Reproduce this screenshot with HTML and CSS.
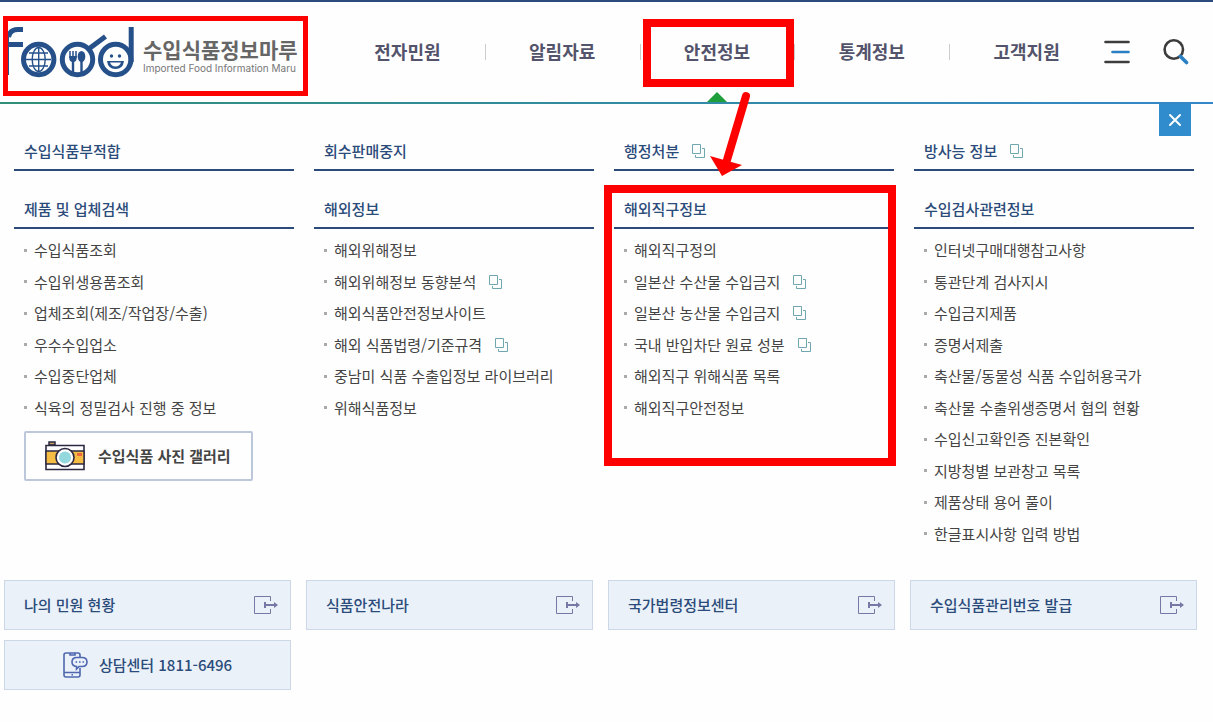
FILE: index.html
```html
<!DOCTYPE html>
<html lang="ko">
<head>
  <meta charset="UTF-8">
  <meta name="viewport" content="width=device-width, initial-scale=1.0">
  <title>수입식품정보마루</title>
  <link rel="stylesheet" href="styles.css">
</head>
<body>
  <!-- 공통 아이콘 -->
  <svg class="defs" width="0" height="0" aria-hidden="true">
    <symbol id="ico-blank" viewBox="0 0 13 14">
      <path d="M.5.5h8v9h-8zM10 4.500h2.500v9h-9v-2.500" fill="none" stroke="#6fa6af"/>
    </symbol>
    <symbol id="ico-exit" viewBox="0 0 24 18">
      <path d="M16.500 5V.5H.5v17h16V13" fill="none" stroke="#7878a6"/>
      <path d="M10 6h2v2h8V6l4 3-4 3v-2h-8v2h-2z" fill="#7878a6"/>
    </symbol>
  </svg>

  <header class="header">
    <a class="logo" href="#">
      <svg class="logo-mark" width="126" height="52" viewBox="8 26 126 52" aria-hidden="true">
        <g fill="none" stroke="#25508a">
          <path d="M23 29.500h-5q-8 0-9.500 7.500M8 44.500h15" stroke-width="5"/>
          <path d="M8.500 34v41" stroke-width="1"/>
          <circle cx="38.700" cy="59.500" r="15.200" stroke-width="5"/>
          <path d="M38.700 47v25M26 59.500h25M29 53h19M29 66h19" stroke-width="1.400"/>
          <ellipse cx="38.700" cy="59.500" rx="6.500" ry="12" stroke-width="1.400"/>
          <circle cx="77.500" cy="59.500" r="15.200" stroke-width="5"/>
          <path d="M90 48l15.500-11.500" stroke-width="5"/>
          <circle cx="115.700" cy="59.500" r="15.200" stroke-width="5"/>
          <path d="M131.200 27v35" stroke-width="5"/>
          <path d="M73 60v12M81.500 60v12" stroke-width="2.400"/>
          <path d="M70 51v7M73 51v7M76 51v7" stroke-width="1.500"/>
        </g>
        <g fill="#25508a">
          <path d="M69.300 56h7.400v2q0 4-3.700 4t-3.700-4z"/>
          <ellipse cx="81.500" cy="56.500" rx="3.800" ry="5.500"/>
          <circle cx="111.500" cy="56" r="1.700"/>
          <circle cx="119.500" cy="56" r="1.700"/>
          <path d="M107 61h17q-1 8-8.500 8T107 61zm3 1.500q1.500 4 5.500 4t5.500-4z" fill-rule="evenodd"/>
        </g>
      </svg>
      <span class="logo-text">
        <strong>수입식품정보마루</strong>
        <small>Imported Food Information Maru</small>
      </span>
    </a>

    <nav class="gnb">
      <a href="#">전자민원</a>
      <a href="#">알림자료</a>
      <a class="on" href="#">안전정보</a>
      <a href="#">통계정보</a>
      <a href="#">고객지원</a>
    </nav>

    <div class="tools">
      <button type="button" aria-label="전체메뉴">
        <svg width="26" height="26" viewBox="0 0 26 26" fill="none" stroke-width="2.600" stroke-linecap="round">
          <path d="M1.500 3h23M1.500 23h23" stroke="#3c3c3c"/>
          <path d="M8.500 13h16" stroke="#2a80c4"/>
        </svg>
      </button>
      <button type="button" aria-label="검색">
        <svg width="26" height="26" viewBox="0 0 26 26" fill="none">
          <circle cx="10.800" cy="10.500" r="9.200" stroke="#3c3c3c" stroke-width="2.600"/>
          <path d="M17.500 17.500l6 6" stroke="#2a80c4" stroke-width="3.600" stroke-linecap="round"/>
        </svg>
      </button>
    </div>
  </header>

  <main class="panel">
    <button class="close" type="button" aria-label="닫기">
      <svg width="14" height="14" viewBox="0 0 14 14"><path d="M2 2l10 10M12 2L2 12" stroke="#fff" stroke-width="2" stroke-linecap="round"/></svg>
    </button>

    <div class="columns">
      <section>
        <h2><a href="#">수입식품부적합</a></h2>
      </section>
      <section>
        <h2><a href="#">회수판매중지</a></h2>
      </section>
      <section>
        <h2><a href="#">행정처분<svg class="blank"><use href="#ico-blank"/></svg></a></h2>
      </section>
      <section>
        <h2><a href="#">방사능 정보<svg class="blank"><use href="#ico-blank"/></svg></a></h2>
      </section>

      <section>
        <h2><a href="#">제품 및 업체검색</a></h2>
        <ul>
          <li><a href="#">수입식품조회</a></li>
          <li><a href="#">수입위생용품조회</a></li>
          <li><a href="#">업체조회(제조/작업장/수출)</a></li>
          <li><a href="#">우수수입업소</a></li>
          <li><a href="#">수입중단업체</a></li>
          <li><a href="#">식육의 정밀검사 진행 중 정보</a></li>
        </ul>
        <a class="gallery" href="#">
          <svg width="40" height="30" viewBox="0 0 40 30" aria-hidden="true">
            <path d="M4 1h6v3H4z" fill="#c9a060" stroke="#2b2842" stroke-width="1.500"/>
            <path d="M1 4.500h38v24H1z" fill="#fff" stroke="#2b2842" stroke-width="1.600"/>
            <path d="M1 10h38v13H1z" fill="#f6bd45" stroke="#2b2842" stroke-width="1.400"/>
            <path d="M32 12h5v3h-5z" fill="#ee6a3c"/>
            <circle cx="20" cy="16.500" r="9" fill="#fff" stroke="#2b2842" stroke-width="1.600"/>
            <circle cx="20" cy="16.500" r="6" fill="#93d8dc"/>
          </svg>
          수입식품 사진 갤러리
        </a>
      </section>
      <section>
        <h2><a href="#">해외정보</a></h2>
        <ul>
          <li><a href="#">해외위해정보</a></li>
          <li><a href="#">해외위해정보 동향분석<svg class="blank"><use href="#ico-blank"/></svg></a></li>
          <li><a href="#">해외식품안전정보사이트</a></li>
          <li><a href="#">해외 식품법령/기준규격<svg class="blank"><use href="#ico-blank"/></svg></a></li>
          <li><a href="#">중남미 식품 수출입정보 라이브러리</a></li>
          <li><a href="#">위해식품정보</a></li>
        </ul>
      </section>
      <section class="marked">
        <svg class="arrow" width="42" height="90" viewBox="0 0 42 90" aria-hidden="true">
          <path d="M37 8L18 72" stroke="#f00" stroke-width="8" stroke-linecap="round"/>
          <path d="M1 68l32 9-20 11z" fill="#f00"/>
        </svg>
        <h2><a href="#">해외직구정보</a></h2>
        <ul>
          <li><a href="#">해외직구정의</a></li>
          <li><a href="#">일본산 수산물 수입금지<svg class="blank"><use href="#ico-blank"/></svg></a></li>
          <li><a href="#">일본산 농산물 수입금지<svg class="blank"><use href="#ico-blank"/></svg></a></li>
          <li><a href="#">국내 반입차단 원료 성분<svg class="blank"><use href="#ico-blank"/></svg></a></li>
          <li><a href="#">해외직구 위해식품 목록</a></li>
          <li><a href="#">해외직구안전정보</a></li>
        </ul>
      </section>
      <section>
        <h2><a href="#">수입검사관련정보</a></h2>
        <ul>
          <li><a href="#">인터넷구매대행참고사항</a></li>
          <li><a href="#">통관단계 검사지시</a></li>
          <li><a href="#">수입금지제품</a></li>
          <li><a href="#">증명서제출</a></li>
          <li><a href="#">축산물/동물성 식품 수입허용국가</a></li>
          <li><a href="#">축산물 수출위생증명서 협의 현황</a></li>
          <li><a href="#">수입신고확인증 진본확인</a></li>
          <li><a href="#">지방청별 보관창고 목록</a></li>
          <li><a href="#">제품상태 용어 풀이</a></li>
          <li><a href="#">한글표시사항 입력 방법</a></li>
        </ul>
      </section>
    </div>

    <div class="quick">
      <a href="#">나의 민원 현황<svg class="exit"><use href="#ico-exit"/></svg></a>
      <a href="#">식품안전나라<svg class="exit"><use href="#ico-exit"/></svg></a>
      <a href="#">국가법령정보센터<svg class="exit"><use href="#ico-exit"/></svg></a>
      <a href="#">수입식품관리번호 발급<svg class="exit"><use href="#ico-exit"/></svg></a>
      <a class="call" href="tel:1811-6496">
        <svg width="25" height="26" viewBox="0 0 25 26" fill="none" stroke="#4f67b0" stroke-width="1.600" aria-hidden="true">
          <path d="M17 6V3q0-2-2-2H3Q1 1 1 3v20q0 2 2 2h12q2 0 2-2v-7M1 20.500h16M7 1v2h5V1"/>
          <path d="M13 5.500h6q5 0 5 4.500t-5 4.500h-3l-2.500 2.500v-2.500Q9 14 9 10t4-4.500z" fill="#eaf1f9"/>
          <path d="M12.500 10h1.600M16 10h1.600M19.500 10h1.600M8.500 22.800h1.500"/>
        </svg>
        상담센터 1811-6496
      </a>
    </div>
  </main>
</body>
</html>
```
FILE: styles.css
```css
*,
*::before,
*::after {
  box-sizing: border-box;
}

body {
  margin: 0;
  font-family: "Noto Sans CJK KR", sans-serif;
  font-size: 15px;
  color: #444;
  background-color: #fefefe;
  border-top: 2px solid #2b4b7e;
}

a {
  color: inherit;
  text-decoration: none;
}

button {
  display: flex;
  align-items: center;
  justify-content: center;
  padding: 0;
  border: none;
  background: none;
  cursor: pointer;
}

.defs {
  position: absolute;
}

/* header */
.header {
  display: flex;
  align-items: center;
  height: 102px;
  border-bottom: 2px solid;
  border-image: linear-gradient(to right, #2f8f78, #3487c8) 1;
}

.logo {
  position: relative;
  display: flex;
  align-items: center;
  gap: 9px;
  width: 330px;
  height: 100px;
  padding-left: 8px;
}

.logo-text {
  display: flex;
  flex-direction: column;
  padding-top: 6px;
}

.logo-text strong {
  font-size: 21px;
  line-height: 26px;
  color: #666;
}

.logo-text small {
  font-family: Inter, sans-serif;
  font-size: 10px;
  line-height: 12px;
  color: #777;
}

/* red marks */
.logo::after,
.gnb .on::after,
.marked::after {
  content: "";
  position: absolute;
  border: 8px solid #f00;
  pointer-events: none;
}

.logo::after {
  top: 14px;
  left: 3px;
  width: 305px;
  height: 80px;
  border-width: 5px;
}

.gnb .on::after {
  top: 17px;
  left: 3px;
  right: 0;
  height: 68px;
}

.marked::after {
  top: -12px;
  left: -10px;
  right: -2px;
  height: 281px;
}

.arrow {
  position: absolute;
  top: -109px;
  left: 95px;
}

.gnb {
  flex: 1;
  display: flex;
}

.gnb a {
  position: relative;
  flex: 1;
  height: 100px;
  line-height: 99px;
  text-align: center;
  font-size: 18px;
  font-weight: 700;
  color: #53536b;
}

.gnb a + a {
  background: linear-gradient(#ccc, #ccc) left center / 1px 16px no-repeat;
}

.gnb .on::before {
  content: "";
  position: absolute;
  bottom: 0;
  left: 50%;
  margin-left: -10px;
  border: 10px solid transparent;
  border-top: 0;
  border-bottom-color: #1f9e3c;
}

.tools {
  display: flex;
  gap: 33px;
  width: 109px;
}

/* menu panel */
.panel {
  position: relative;
  padding: 35px 16px 32px 4px;
}

.close {
  position: absolute;
  top: 0;
  right: 22px;
  width: 32px;
  height: 32px;
  background-color: #308ccc;
}

.columns {
  display: grid;
  grid-template-columns: repeat(4, 1fr);
  gap: 26px 20px;
  padding: 0 3px 0 10px;
}

.marked {
  position: relative;
}

h2 {
  margin: 0;
  padding: 0 10px 6px;
  border-bottom: 2px solid #2b4b7a;
  font-size: 15px;
  font-weight: 500;
  line-height: 24px;
  color: #2b4b7a;
}

ul {
  margin: 0;
  padding: 5px 10px 0;
  list-style: none;
}

li {
  display: flex;
  align-items: center;
  line-height: 32px;
}

li:nth-child(even) {
  line-height: 31px;
}

li::before {
  content: "";
  width: 3px;
  height: 3px;
  margin-right: 7px;
  background-color: #aaa;
}

.blank {
  width: 13px;
  height: 14px;
  margin-left: 13px;
  vertical-align: -1px;
}

.gallery {
  display: inline-flex;
  align-items: center;
  gap: 13px;
  height: 50px;
  margin: 8px 10px 0;
  padding: 0 20px 1px 19px;
  border: 2px solid #bdc7da;
  border-radius: 2px;
  font-weight: 700;
}

/* quick links */
.quick {
  display: grid;
  grid-template-columns: repeat(4, 1fr);
  gap: 10px 15px;
  margin-top: 31px;
}

.quick a {
  display: flex;
  align-items: center;
  justify-content: space-between;
  height: 50px;
  padding: 0 12px 1px 19px;
  border: 1px solid #ccd7e7;
  background-color: #eaf1f9;
  font-weight: 500;
  color: #2b4b7a;
}

.quick .call {
  justify-content: center;
  gap: 11px;
  padding: 0 12px 1px;
}

.exit {
  width: 24px;
  height: 18px;
}
```
